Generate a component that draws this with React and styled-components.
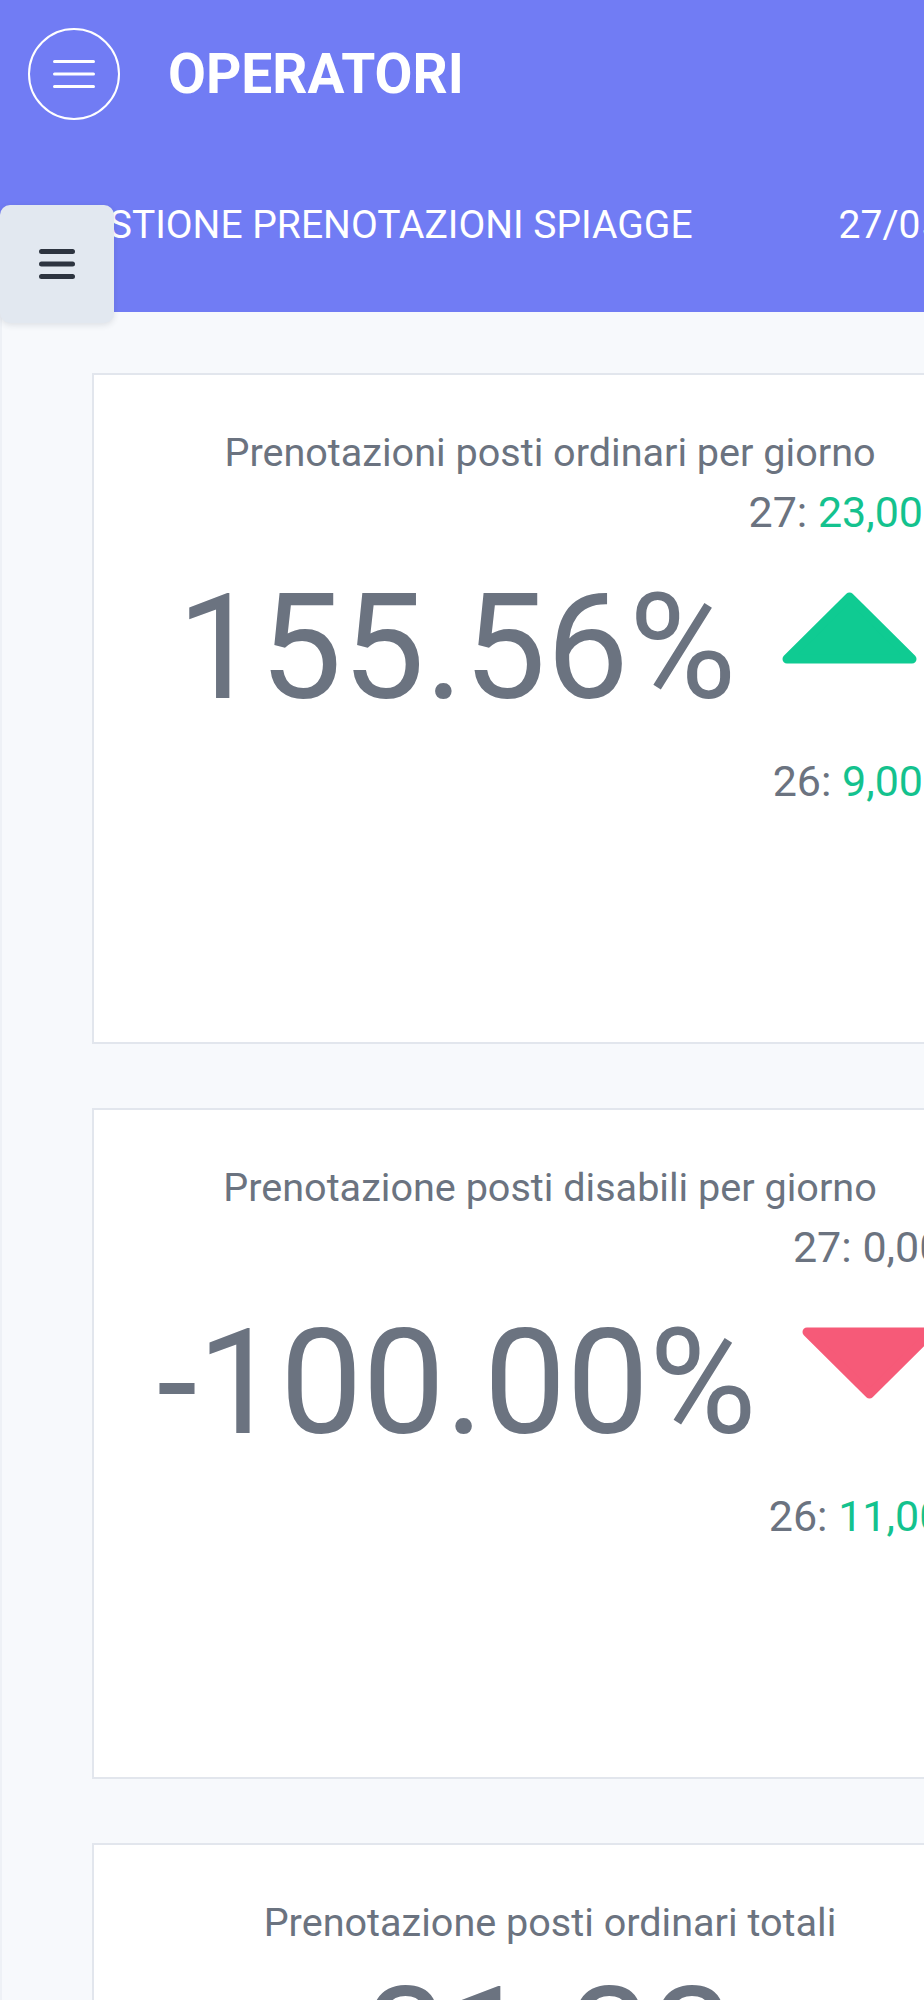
import React from 'react';
import styled, { createGlobalStyle } from 'styled-components';

const GlobalStyle = createGlobalStyle`
  html, body {
    margin: 0;
    padding: 0;
    background: #f7f9fc;
    font-family: Roboto, 'Liberation Sans', sans-serif;
  }
`;

const Page = styled.div`
  position: relative;
  width: 100%;
  min-height: 2000px;
  overflow: hidden;
  background: #f7f9fc;
`;

const Header = styled.header`
  box-sizing: border-box;
  height: 312px;
  padding: 28px 0 0 28px;
  background: #717cf4;
  color: #fff;
`;

const TopRow = styled.div`
  display: flex;
  align-items: center;
  gap: 48px;
`;

const MenuCircle = styled.button`
  box-sizing: border-box;
  width: 92px;
  height: 92px;
  border-radius: 50%;
  border: 2.5px solid #fff;
  background: transparent;
  display: flex;
  align-items: center;
  justify-content: center;
  padding: 0;
`;

const Brand = styled.h1`
  margin: 0;
  font-size: 55px;
  font-weight: 700;
  line-height: 1;
`;

const SubRow = styled.div`
  display: flex;
  white-space: nowrap;
  margin: 82px 0 0 32px;
  font-size: 39px;
  line-height: 1.2;
`;

const DateText = styled.span`
  margin-left: 146px;
`;

const SideToggle = styled.button`
  position: absolute;
  left: 0;
  top: 205px;
  width: 114px;
  height: 118px;
  border: none;
  border-radius: 10px;
  background: #e2e8f0;
  box-shadow: 0 2px 6px rgba(30, 40, 60, 0.12);
  display: flex;
  align-items: center;
  justify-content: center;
  padding: 0;
`;

const Main = styled.main`
  display: flex;
  flex-direction: column;
  gap: 64px;
  padding: 61px 0 80px 90px;
  border-left: 2px solid #eef1f6;
`;

const Card = styled.section`
  box-sizing: border-box;
  width: 916px;
  height: 671px;
  flex-shrink: 0;
  background: #fff;
  border: 2px solid #e2e6ed;
  padding-top: 54px;
  display: flex;
  flex-direction: column;
  align-items: center;
  color: #6b7380;
`;

const CardTitle = styled.h2`
  margin: 0;
  font-size: 39.6px;
  font-weight: 400;
  line-height: 1.2;
`;

const StatRow = styled.div`
  display: flex;
  justify-content: center;
  align-items: flex-start;
  gap: 12px;
  margin-top: 10px;
`;

const BigValue = styled.div`
  font-size: 147px;
  line-height: 1.2;
  margin-top: ${(p) => p.$offset}px;
  white-space: nowrap;
`;

const Trend = styled.div`
  display: flex;
  flex-direction: column;
  align-items: flex-end;
`;

const DayLabel = styled.div`
  font-size: 43px;
  line-height: 1.2;
  white-space: nowrap;
  margin-top: ${(p) => p.$gap || 0}px;
`;

const DayValue = styled.span`
  color: ${(p) => (p.$positive ? '#14c28e' : '#6b7380')};
`;

const Arrow = styled.svg`
  display: block;
  margin: 54px 6px 0 0;
`;

const Burger = ({ color, width, thick, step }) => (
  <svg width={width} height={step * 2 + thick} viewBox={`0 0 ${width} ${step * 2 + thick}`}>
    {[0, 1, 2].map((i) => (
      <line
        key={i}
        x1={thick / 2}
        x2={width - thick / 2}
        y1={thick / 2 + i * step}
        y2={thick / 2 + i * step}
        stroke={color}
        strokeWidth={thick}
        strokeLinecap="round"
      />
    ))}
  </svg>
);

const TrendArrow = ({ up }) => (
  <Arrow width="135" height="72" viewBox="0 0 135 72">
    {up ? (
      <polygon
        points="5,67 67.5,5 130,67"
        fill="#0fcb92"
        stroke="#0fcb92"
        strokeWidth="9"
        strokeLinejoin="round"
      />
    ) : (
      <polygon
        points="5,5 130,5 67.5,67"
        fill="#f65a78"
        stroke="#f65a78"
        strokeWidth="9"
        strokeLinejoin="round"
      />
    )}
  </Arrow>
);

const stats = [
  {
    title: 'Prenotazioni posti ordinari per giorno',
    value: '155.56%',
    up: true,
    today: '23,00',
    yesterday: '9,00',
    todayPos: true,
    yesterdayPos: true,
  },
  {
    title: 'Prenotazione posti disabili per giorno',
    value: '-100.00%',
    up: false,
    today: '0,00',
    yesterday: '11,00',
    todayPos: false,
    yesterdayPos: true,
  },
];

const App = () => (
  <>
    <GlobalStyle />
    <Page>
      <Header>
        <TopRow>
          <MenuCircle aria-label="menu">
            <Burger color="#fff" width={42} thick={3} step={12.5} />
          </MenuCircle>
          <Brand>OPERATORI</Brand>
        </TopRow>
        <SubRow>
          <span>GESTIONE PRENOTAZIONI SPIAGGE</span>
          <DateText>27/05/2021</DateText>
        </SubRow>
      </Header>

      <SideToggle aria-label="sidebar">
        <Burger color="#2d3440" width={36} thick={5} step={12.5} />
      </SideToggle>

      <Main>
        {stats.map((s) => (
          <Card key={s.title}>
            <CardTitle>{s.title}</CardTitle>
            <StatRow>
              <BigValue $offset={73}>{s.value}</BigValue>
              <Trend>
                <DayLabel>
                  27: <DayValue $positive={s.todayPos}>{s.today}</DayValue>
                </DayLabel>
                <TrendArrow up={s.up} />
                <DayLabel $gap={92}>
                  26: <DayValue $positive={s.yesterdayPos}>{s.yesterday}</DayValue>
                </DayLabel>
              </Trend>
            </StatRow>
          </Card>
        ))}
        <Card>
          <CardTitle>Prenotazione posti ordinari totali</CardTitle>
          <BigValue $offset={6}>31.33</BigValue>
        </Card>
      </Main>
    </Page>
  </>
);

export default App;
